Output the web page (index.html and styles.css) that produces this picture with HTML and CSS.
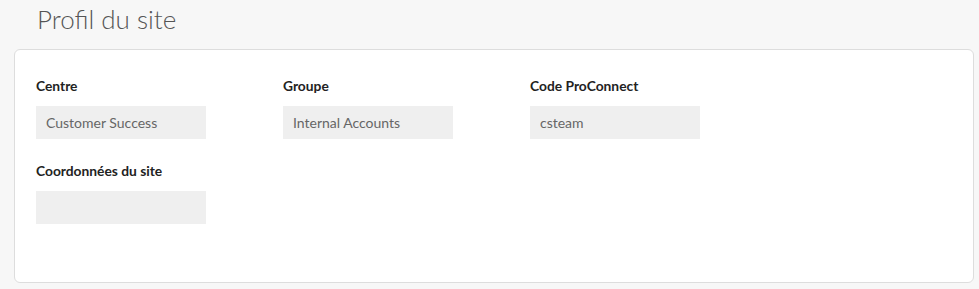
FILE: index.html
```html
<!DOCTYPE html>
<html lang="fr">
<head>
    <meta charset="UTF-8">
    <meta name="viewport" content="width=device-width, initial-scale=1.0">
    <title>Profil du site</title>
    <link rel="stylesheet" href="styles.css">
</head>
<body>
    <h1 class="page-title">Profil du site</h1>

    <div class="card">
        <div class="fields">
            <div class="field">
                <label for="centre">Centre</label>
                <input type="text" id="centre" value="Customer Success" readonly>
            </div>
            <div class="field">
                <label for="groupe">Groupe</label>
                <input type="text" id="groupe" value="Internal Accounts" readonly>
            </div>
            <div class="field">
                <label for="code">Code ProConnect</label>
                <input type="text" id="code" value="csteam" readonly>
            </div>
            <div class="field">
                <label for="coords">Coordonnées du site</label>
                <input type="text" id="coords" value="" readonly>
            </div>
        </div>
    </div>
</body>
</html>
```

FILE: styles.css
```css
body {
    font-family: Lato, "Open Sans", sans-serif;
    margin: 0;
    padding: 0 5px 0 14px;
    background-color: #f7f7f7;
}

.page-title {
    font-size: 26px;
    font-weight: 300;
    line-height: 30px;
    color: #555;
    margin: 4px 0 15px 23px;
}

.card {
    background-color: #fff;
    border: 1px solid #ddd;
    border-radius: 6px;
    padding: 28px 21px 58px;
}

.fields {
    display: grid;
    grid-template-columns: repeat(3, 170px);
    column-gap: 77px;
    row-gap: 24px;
}

.field label {
    display: block;
    font-size: 13.8px;
    font-weight: bold;
    line-height: 16px;
    color: #222;
    margin-bottom: 12px;
}

.field input {
    display: block;
    box-sizing: border-box;
    width: 170px;
    height: 33px;
    padding: 0 10px;
    border: none;
    background-color: #efefef;
    font-family: inherit;
    font-size: 14px;
    color: #666;
    outline: none;
}
```
